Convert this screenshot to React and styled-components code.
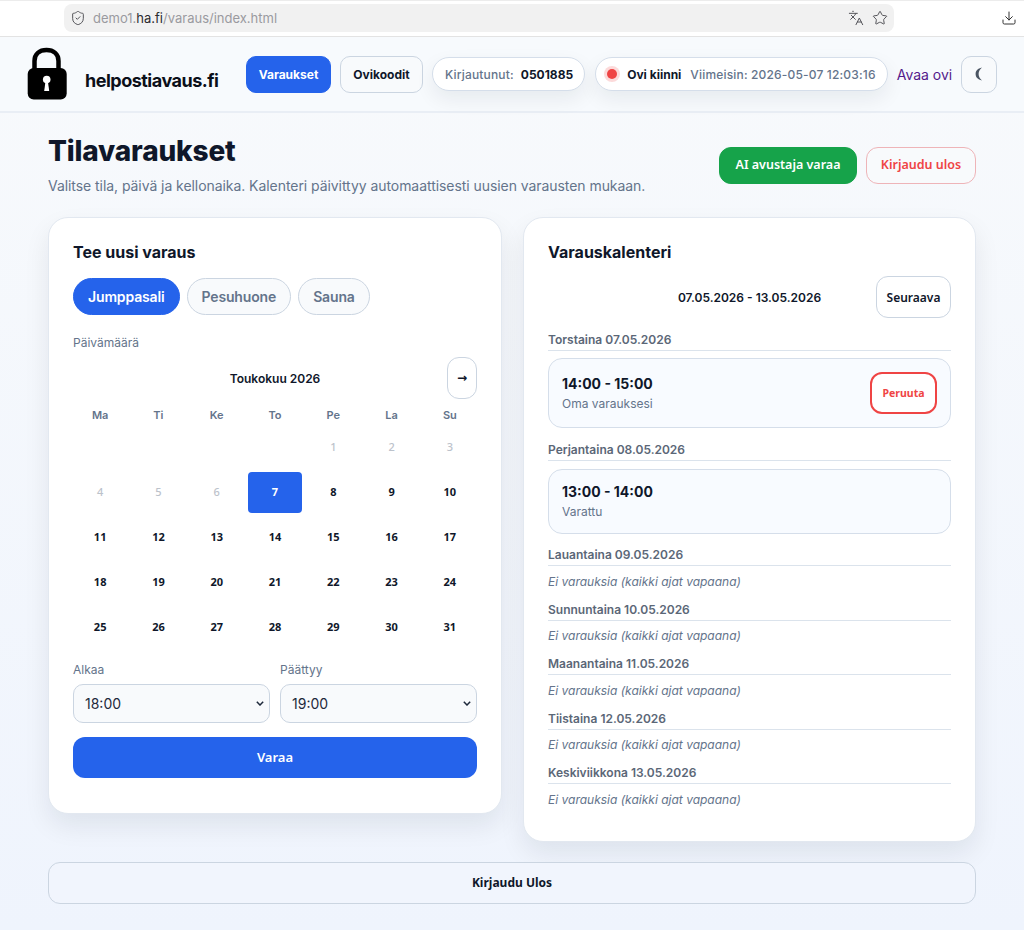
import React from 'react';
import styled, { createGlobalStyle } from 'styled-components';
import { ShieldCheck, Languages, Star, Download } from 'lucide-react';

const Global = createGlobalStyle`
  html, body { margin: 0; padding: 0; }
  body {
    font-family: Inter, "Liberation Sans", sans-serif;
    color: #0f172a;
    background: #f1f5fd;
  }
  * { box-sizing: border-box; }
`;

const btnFont = `"Noto Sans", "Open Sans", sans-serif`;

const Page = styled.div`
  width: 1024px; height: 930px; overflow: hidden;
  display: flex; flex-direction: column;
  background: linear-gradient(180deg, #f8fafc 0%, #eff4fd 100%);
`;
const BrowserBar = styled.div`
  height: 37px; background: #fff; border-top: 1px solid #ececec; border-bottom: 1px solid #e3e3e3;
  display: flex; align-items: center; padding: 0 6px 1px 64px; flex: none;
`;
const UrlBox = styled.div`
  width: 830px; height: 28px; background: #f1f1f1; border-radius: 8px;
  display: flex; align-items: center; padding: 0 6px 0 6px; gap: 7px;
  font-size: 13px; color: #9a9a9f;
  svg { color: #55555a; flex: none; }
  b { font-weight: 400; color: #2b2b30; }
`;
const UrlText = styled.span` flex: 1; `;
const BarIcons = styled.div` display: flex; gap: 8px; color: #55555a; align-items: center; `;
const DownloadSlot = styled.div` margin-left: auto; display: flex; color: #333; padding-right: 1px; `;

const Header = styled.header`
  height: 76px; flex: none; display: flex; align-items: center;
  padding: 0 27px; border-bottom: 2px solid #e9eef5;
  background: #f7fafd;
`;
const Brand = styled.div`
  display: flex; align-items: center; gap: 18px; width: 219px; flex: none;
  font-size: 18px; font-weight: 700; color: #0b0f19; letter-spacing: -0.5px;
`;
const BrandText = styled.span` margin-top: 12px; `;
const NavBtn = styled.a`
  display: flex; align-items: center; justify-content: center;
  width: ${p => p.$w}px; height: 37px; border-radius: 10px; font-size: 12px; font-weight: 700;
  margin-right: 9px; flex: none;
  color: ${p => (p.$active ? '#fff' : '#0f172a')};
  background: ${p => (p.$active ? '#2563eb' : '#f8fafc')};
  border: 1px solid ${p => (p.$active ? '#2563eb' : '#cbd5e1')};
`;
const Pill = styled.div`
  display: flex; align-items: center; height: 34px; padding: 0 11px 0 ${p => p.$pl || 12}px;
  background: #fff; border: 1px solid #d5deea; border-radius: 17px;
  margin-right: ${p => p.$mr || 9}px; flex: none;
  font-size: 12px; color: #64748b; font-weight: 500; white-space: nowrap; letter-spacing: 0.17px;
  box-shadow: 0 8px 20px rgba(15, 23, 42, 0.07);
`;
const PillStrong = styled.strong`
  color: #0f172a; font-weight: 700; letter-spacing: 0; margin-left: ${p => p.$ml || 0}px; margin-right: ${p => p.$mr || 0}px;
`;
const Dot = styled.span`
  width: 10px; height: 10px; border-radius: 50%; background: #ef4444;
  box-shadow: 0 0 0 3px rgba(239, 68, 68, 0.2); margin-right: 10px; flex: none;
`;
const OpenLink = styled.a`
  font-size: 14px; color: #551a8b; margin-right: 9px; flex: none; text-decoration: none; white-space: nowrap;
`;
const ThemeBtn = styled.button`
  width: 36px; height: 37px; border-radius: 10px; background: #f8fafc; border: 1px solid #cbd5e1;
  padding: 0; color: #4b5563; flex: none; display: flex; align-items: center; justify-content: center;
`;

const Main = styled.main`
  padding: 0 48px; display: flex; flex-direction: column; flex: 1;
`;
const TitleRow = styled.div`
  display: flex; justify-content: space-between; align-items: flex-start;
  padding-top: 19px; height: 104px; flex: none;
`;
const Title = styled.h1`
  margin: 0; font-size: 28px; line-height: 38px; font-weight: 800; color: #0f172a; letter-spacing: -0.17px;
`;
const Subtitle = styled.p`
  margin: 6px 0 0; font-size: 14px; line-height: 20px; color: #64748b; letter-spacing: -0.06px;
`;
const TitleActions = styled.div` display: flex; gap: 9px; margin-top: 15px; `;
const ActionBtn = styled.button`
  height: 37px; border-radius: 12px; font-family: ${btnFont}; font-size: 12.5px; font-weight: 600;
  width: ${p => p.$w}px; padding: 0 0 2px;
  color: ${p => (p.$danger ? '#ef4444' : '#fff')};
  background: ${p => (p.$danger ? '#f8fafc' : '#16a34a')};
  border: 1px solid ${p => (p.$danger ? '#eeb4b8' : '#16a34a')};
`;
const Columns = styled.div`
  display: grid; grid-template-columns: 454px 453px; justify-content: space-between;
  align-items: start;
`;
const Card = styled.section`
  background: #fff; border: 1px solid #e2e8f0; border-radius: 20px;
  padding: 24px; height: ${p => p.$h}px;
  box-shadow: 0 12px 26px rgba(15, 23, 42, 0.08);
`;
const CardTitle = styled.h2`
  margin: 0; font-size: 16px; line-height: 20px; font-weight: 700; color: #0f172a;
`;
const Tabs = styled.div` display: flex; gap: 7px; margin-top: 16px; `;
const Tab = styled.button`
  height: 37px; border-radius: 19px; padding: 0 14px; font-family: Inter, sans-serif;
  font-size: 14px; font-weight: 600; letter-spacing: -0.15px;
  color: ${p => (p.$active ? '#fff' : '#64748b')};
  background: ${p => (p.$active ? '#2563eb' : '#f8fafc')};
  border: 1px solid ${p => (p.$active ? '#2563eb' : '#cbd5e1')};
`;
const FieldLabel = styled.div`
  font-size: 12px; line-height: 16px; color: #64748b;
  margin-top: ${p => p.$mt || 0}px;
`;
const CalHead = styled.div`
  display: flex; align-items: center; justify-content: space-between; margin-top: 6px;
`;
const MonthTitle = styled.div` font-size: 12px; font-weight: 600; color: #0f172a; `;
const ArrowBtn = styled.button`
  width: 30px; height: 42px; border-radius: 12px; background: #fff; border: 1px solid #cbd5e1;
  padding: 0; font-size: 12px; color: #0f172a; font-family: "DejaVu Sans", sans-serif; font-weight: 700;
  visibility: ${p => (p.$hidden ? 'hidden' : 'visible')};
`;
const Grid = styled.div`
  display: grid; grid-template-columns: repeat(7, 1fr); column-gap: 4px; row-gap: 4px; margin-top: 4px;
`;
const Weekday = styled.div`
  text-align: center; font-size: 11px; font-weight: 600; color: #64748b; line-height: 24px; height: 20px;
`;
const Day = styled.button`
  height: 41px; border: none; border-radius: 4px; padding: 0 0 2px;
  font-family: ${btnFont}; font-size: 11px;
  color: ${p => (p.$sel ? '#fff' : p.$off ? '#bcc2cb' : '#0f172a')};
  font-weight: ${p => (p.$off ? 500 : 700)};
  background: ${p => (p.$sel ? '#2563eb' : 'transparent')};
`;
const DayBlank = styled.div``;
const TimeRow = styled.div`
  display: grid; grid-template-columns: 1fr 1fr; gap: 10px; margin-top: 14px;
`;
const TimeLabel = styled.div` font-size: 12px; line-height: 16px; color: #64748b; margin-bottom: 6px; `;
const Select = styled.div`
  height: 39px; border: 1px solid #cbd5e1; border-radius: 10px; background: #f8fafc;
  display: flex; align-items: center; justify-content: space-between;
  padding: 0 5px 1px 11px; font-size: 14px; color: #1e293b;
`;
const Submit = styled.button`
  width: 100%; height: 41px; margin-top: 14px; border: none; border-radius: 12px; padding: 0 0 2px;
  background: #2563eb; color: #fff; font-family: ${btnFont}; font-size: 13px; font-weight: 600;
`;
const WeekHead = styled.div`
  display: flex; align-items: center; justify-content: space-between; margin-top: 14px;
`;
const WeekRange = styled.div` font-size: 12px; font-weight: 600; color: #0f172a; `;
const NextBtn = styled.button`
  width: 75px; height: 42px; border-radius: 12px; background: #fff; border: 1px solid #cbd5e1; padding: 0;
  font-family: ${btnFont}; font-size: 12px; font-weight: 600; color: #0f172a;
  visibility: ${p => (p.$hidden ? 'hidden' : 'visible')};
`;
const DayHead = styled.div`
  font-size: 12px; font-weight: 600; line-height: 16px; color: #5b6777; padding-bottom: 2px;
  border-bottom: 1px solid #dbe3ec; margin-top: ${p => p.$mt}px;
`;
const Booking = styled.div`
  display: flex; align-items: center; justify-content: space-between;
  height: ${p => p.$h}px; margin-top: 7.5px; padding: 0 13px; border: 1px solid #d5deea; border-radius: 14px; background: #f8fbff;
`;
const BookingTime = styled.div` font-size: 14px; font-weight: 700; line-height: 18px; color: #0f172a; `;
const BookingNote = styled.div` font-size: 12px; line-height: 16px; color: #64748b; margin-top: 3px; `;
const CancelBtn = styled.button`
  width: 67px; height: 42px; border-radius: 12px; border: 2px solid #ef4444; background: #fff; padding: 0;
  color: #ef4444; font-family: ${btnFont}; font-size: 10.5px; font-weight: 700;
`;
const Empty = styled.div`
  font-size: 12px; line-height: 16px; font-style: italic; color: #64748b; margin-top: 7.5px;
`;
const LogoutBar = styled.button`
  height: 42px; margin-top: 20px; width: 100%; flex: none; border: 1px solid #cbd5e1; border-radius: 12px; padding: 0 0 2px;
  background: #f1f5fd; font-family: ${btnFont}; font-size: 12px; font-weight: 700; color: #0f172a;
`;

const Logo = () => (
  <svg width="40" height="54" viewBox="0 0 40 54" aria-hidden="true">
    <path d="M7.5 24V14C7.5 7 12.5 3 19.5 3s12 4 12 11v10" fill="none" stroke="#000" strokeWidth="4.5" />
    <rect x="0.7" y="21" width="39" height="31.5" rx="6" fill="#000" />
    <circle cx="19.7" cy="32.5" r="3.8" fill="#fff" />
    <path d="M18.4 35h2.6l1.2 9h-5z" fill="#fff" />
  </svg>
);

const Moon = () => (
  <svg width="8" height="14" viewBox="0 0 8 14" aria-hidden="true">
    <path d="M7 0.6C2.6 1.4 0.6 4 0.6 7s2 5.6 6.4 6.4C4.8 11.6 3.6 9.4 3.6 7S4.8 2.4 7 0.6z" fill="currentColor" />
  </svg>
);

const Chevron = () => (
  <svg width="8" height="5" viewBox="0 0 8 5" fill="none" aria-hidden="true">
    <path d="M0.8 0.8L4 4l3.2-3.2" stroke="#1e293b" strokeWidth="1.5" />
  </svg>
);

const weekdays = ['Ma', 'Ti', 'Ke', 'To', 'Pe', 'La', 'Su'];
const emptyDays = [
  ['Lauantaina 09.05.2026', 13.5],
  ['Sunnuntaina 10.05.2026', 12],
  ['Maanantaina 11.05.2026', 12],
  ['Tiistaina 12.05.2026', 12],
  ['Keskiviikkona 13.05.2026', 12],
];

export default function App() {
  return (
    <Page>
      <Global />
      <BrowserBar>
        <UrlBox>
          <ShieldCheck size={16} strokeWidth={1.5} />
          <UrlText>demo1.<b>ha.fi</b>/varaus/index.html</UrlText>
          <BarIcons>
            <Languages size={16} strokeWidth={1.5} />
            <Star size={16} strokeWidth={1.5} />
          </BarIcons>
        </UrlBox>
        <DownloadSlot><Download size={16} strokeWidth={1.5} /></DownloadSlot>
      </BrowserBar>
      <Header>
        <Brand>
          <Logo />
          <BrandText>helpostiavaus.fi</BrandText>
        </Brand>
        <NavBtn $active $w={85}>Varaukset</NavBtn>
        <NavBtn $w={83}>Ovikoodit</NavBtn>
        <Pill $mr={10}>Kirjautunut: <PillStrong $ml={7}>0501885</PillStrong></Pill>
        <Pill $pl={11}>
          <Dot />
          <PillStrong $mr={9}>Ovi kiinni</PillStrong>
          Viimeisin: 2026-05-07 12:03:16
        </Pill>
        <OpenLink>Avaa ovi</OpenLink>
        <ThemeBtn aria-label="☾"><Moon /></ThemeBtn>
      </Header>
      <Main>
        <TitleRow>
          <div>
            <Title>Tilavaraukset</Title>
            <Subtitle>Valitse tila, päivä ja kellonaika. Kalenteri päivittyy automaattisesti uusien varausten mukaan.</Subtitle>
          </div>
          <TitleActions>
            <ActionBtn $w={138}>AI avustaja varaa</ActionBtn>
            <ActionBtn $danger $w={110}>Kirjaudu ulos</ActionBtn>
          </TitleActions>
        </TitleRow>
        <Columns>
          <Card $h={597}>
            <CardTitle>Tee uusi varaus</CardTitle>
            <Tabs>
              <Tab $active>Jumppasali</Tab>
              <Tab>Pesuhuone</Tab>
              <Tab>Sauna</Tab>
            </Tabs>
            <FieldLabel $mt={20}>Päivämäärä</FieldLabel>
            <CalHead>
              <ArrowBtn $hidden>←</ArrowBtn>
              <MonthTitle>Toukokuu 2026</MonthTitle>
              <ArrowBtn>→</ArrowBtn>
            </CalHead>
            <Grid>
              {weekdays.map(w => <Weekday key={w}>{w}</Weekday>)}
              {[0, 1, 2, 3].map(i => <DayBlank key={i} />)}
              {[1, 2, 3, 4, 5, 6].map(d => <Day key={d} $off>{d}</Day>)}
              {Array.from({ length: 25 }, (_, i) => i + 7).map(d => (
                <Day key={d} $sel={d === 7}>{d}</Day>
              ))}
            </Grid>
            <TimeRow>
              <div>
                <TimeLabel>Alkaa</TimeLabel>
                <Select>18:00<Chevron /></Select>
              </div>
              <div>
                <TimeLabel>Päättyy</TimeLabel>
                <Select>19:00<Chevron /></Select>
              </div>
            </TimeRow>
            <Submit>Varaa</Submit>
          </Card>
          <Card $h={625}>
            <CardTitle>Varauskalenteri</CardTitle>
            <WeekHead>
              <NextBtn $hidden>Edellinen</NextBtn>
              <WeekRange>07.05.2026 - 13.05.2026</WeekRange>
              <NextBtn>Seuraava</NextBtn>
            </WeekHead>
            <DayHead $mt={13.5}>Torstaina 07.05.2026</DayHead>
            <Booking $h={70}>
              <div>
                <BookingTime>14:00 - 15:00</BookingTime>
                <BookingNote>Oma varauksesi</BookingNote>
              </div>
              <CancelBtn>Peruuta</CancelBtn>
            </Booking>
            <DayHead $mt={14}>Perjantaina 08.05.2026</DayHead>
            <Booking $h={65}>
              <div>
                <BookingTime>13:00 - 14:00</BookingTime>
                <BookingNote>Varattu</BookingNote>
              </div>
            </Booking>
            {emptyDays.map(([label, mt]) => (
              <React.Fragment key={label}>
                <DayHead $mt={mt}>{label}</DayHead>
                <Empty>Ei varauksia (kaikki ajat vapaana)</Empty>
              </React.Fragment>
            ))}
          </Card>
        </Columns>
        <LogoutBar>Kirjaudu Ulos</LogoutBar>
      </Main>
    </Page>
  );
}
